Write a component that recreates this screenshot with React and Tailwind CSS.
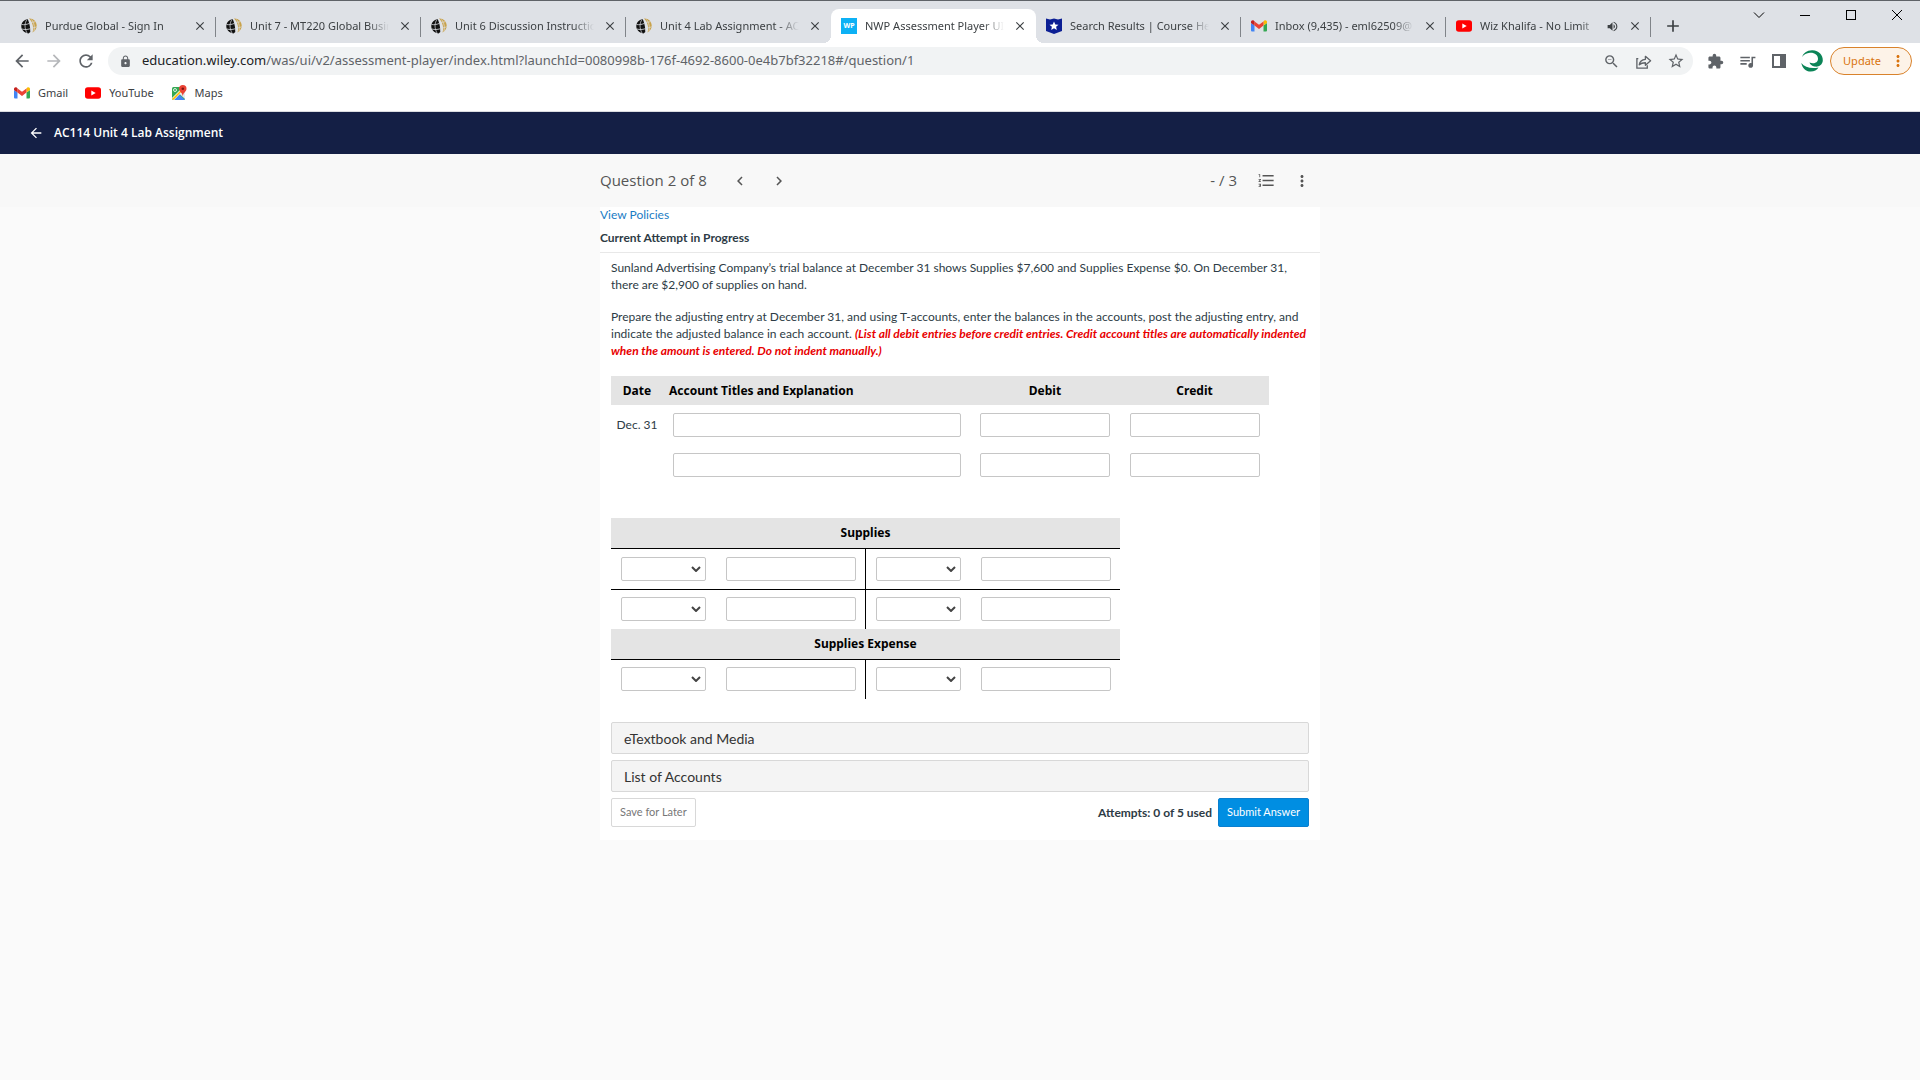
import { MdArrowBack, MdArrowForward, MdRefresh, MdLock, MdExtension, MdQueueMusic, MdStarBorder, MdZoomOut, MdClose, MdAdd, MdVolumeUp, MdFormatListNumbered, MdMoreVert, MdChevronLeft, MdChevronRight } from "react-icons/md";

const PurdueIcon = () => (
  <svg viewBox="0 0 16 16" className="w-4 h-4 shrink-0">
    <path d="M6.500 1C3 2 .3 4.500.3 8.200c0 3.500 2.500 6.300 7.200 7.300L9.300 14c-.2-2 0-4-.6-6.500C8.300 5 7.500 2.500 6.500 1z" fill="#111" />
    <path d="M8 .5c4.500-.3 7.500 3 7.700 7 .1 3-1.500 5.500-4.200 7 .8-2.500.8-4.500.3-7C11.300 5 10 2.500 8 .5z" fill="#c9a24a" />
    <path d="M.5 6.500c3 .5 5.500 0 8-1.200M.8 11c3 .8 5.500.6 8.200-.2" stroke="#dee1e6" strokeWidth="0.800" fill="none" />
    <path d="M6 1.500C3.500 5 3.300 10 6 15M9.500 4.500c2-.3 3.500-.5 5-.8M11.500 10c1.500-.2 2.800-.6 4-1.200M10.500 1.500c2.800 3.500 3.500 8 2.300 12" stroke="#dee1e6" strokeWidth="0.700" fill="none" />
  </svg>
);

const GmailIcon = () => (
  <svg viewBox="0 0 16 16" className="w-4 h-4 shrink-0">
    <path d="M1 13.500h2.500V7.500L0 5v7.500a1 1 0 0 0 1 1z" fill="#4285f4" />
    <path d="M12.500 13.500H15a1 1 0 0 0 1-1V5l-3.500 2.500z" fill="#34a853" />
    <path d="M12.500 3.500v4L16 5V4c0-1.500-1.500-2.300-2.700-1.400z" fill="#fbbc04" />
    <path d="M3.500 7.500v-4L8 6.800l4.500-3.300v4L8 11z" fill="#ea4335" />
    <path d="M0 4v1l3.500 2.500v-4l-.8-.9C1.500 1.700 0 2.500 0 4z" fill="#c5221f" />
  </svg>
);

const YouTubeIcon = () => (
  <svg viewBox="0 0 16 16" className="w-4 h-4 shrink-0">
    <rect x="0" y="2.200" width="16" height="11.600" rx="2.800" fill="#f00" />
    <path d="M6.300 5.500v5L10.700 8z" fill="#fff" />
  </svg>
);

const MapsIcon = () => (
  <svg viewBox="0 0 16 16" className="w-4 h-4 shrink-0">
    <rect x="1" y="2" width="13" height="13" rx="1.500" fill="#34a853" />
    <path d="M8 8.500L14 14V7z" fill="#e8eaed" />
    <path d="M2 15L8 9l6 6z" fill="#4285f4" />
    <path d="M1 13L12 2h2v2L2.500 15.500z" fill="#fff" />
    <path d="M1 14L13 2l1 1L2.500 15z" fill="#fbbc04" />
    <circle cx="4" cy="5" r="1.500" fill="none" stroke="#fff" strokeWidth="0.800" />
    <path d="M11.800 0a3.700 3.700 0 0 0-3.700 3.700c0 2.800 2.900 3.300 3.700 7.300.8-4 3.700-4.500 3.700-7.300A3.700 3.700 0 0 0 11.800 0z" fill="#ea4335" />
    <circle cx="11.800" cy="3.700" r="1.300" fill="#811411" />
  </svg>
);

const WileyIcon = () => (
  <span className="flex items-center justify-center shrink-0 w-4 h-4 bg-[#0db1f5] text-white text-[7px] font-bold">WP</span>
);

const CourseHeroIcon = () => (
  <svg viewBox="0 0 16 16" className="w-4 h-4 shrink-0">
    <path d="M0 0.500l4 1 4-1 4 1 4-1V13l-8 3-8-3z" fill="#0c1f94" />
    <path d="M8 3.500l1.300 2.900 3.200.3-2.400 2.100.7 3.100L8 10.300l-2.800 1.600.7-3.100-2.400-2.100 3.200-.3z" fill="#fff" />
  </svg>
);

const ShareIcon = () => (
  <svg viewBox="0 0 18 18" className="w-[17px] h-[17px]" fill="none" stroke="#5f6368" strokeWidth="1.400">
    <path d="M3.500 6H2v10h11v-3" />
    <path d="M4.500 12.500c.5-3.500 3-5.500 6.500-5.800V3.500l5.500 4.800-5.500 4.700v-2.700c-2.700 0-4.800.5-6.500 2.200z" strokeLinejoin="round" />
  </svg>
);

const ProfileIcon = () => (
  <svg viewBox="0 0 22 22" className="w-[22px] h-[22px]">
    <path d="M1 7C2.500 3 6 0 11.500.2 18 .5 22 5 21.800 10.500c-.3 4.500-4.300 6.800-8.300 6-2.500-.5-4.500-2-5-4 4 1.500 8.500.5 8.500-3.800C17 5 13.500 2.500 9 2.800 5.500 3 3 4.500 1 7z" fill="#0b8457" />
    <path d="M.3 13c3.500 4.200 9.500 6 17.200 4.500-1.500 2.500-4.500 4.200-8 4.100C5 21.500 1.200 18 .3 13z" fill="#0b8457" />
  </svg>
);

const tabs = [
  { title: "Purdue Global - Sign In", icon: <PurdueIcon /> },
  { title: "Unit 7 - MT220 Global Business", icon: <PurdueIcon /> },
  { title: "Unit 6 Discussion Instructions", icon: <PurdueIcon /> },
  { title: "Unit 4 Lab Assignment - AC114", icon: <PurdueIcon />, beforeActive: true },
  { title: "NWP Assessment Player UI", icon: <WileyIcon />, active: true },
  { title: "Search Results | Course Hero", icon: <CourseHeroIcon /> },
  { title: "Inbox (9,435) - eml62509@", icon: <GmailIcon /> },
  { title: "Wiz Khalifa - No Limit", icon: <YouTubeIcon />, audio: true },
];

const Tab = ({ title, icon, active, beforeActive, audio }) => (
  <div
    className={`relative flex items-center w-[205px] min-w-0 h-[34px] pl-[10px] pr-2 ${active ? "bg-white rounded-t-lg" : ""}`}
  >
    {active && (
      <>
        <span className="absolute bottom-0 -left-2 w-2 h-2 bg-[radial-gradient(circle_at_0_0,transparent_8px,#fff_8px)]"></span>
        <span className="absolute bottom-0 -right-2 w-2 h-2 bg-[radial-gradient(circle_at_100%_0,transparent_8px,#fff_8px)]"></span>
      </>
    )}
    {icon}
    <span className="flex-1 min-w-0 ml-2 overflow-hidden whitespace-nowrap text-[11px] text-[#3c4043] [mask-image:linear-gradient(to_right,#000_85%,transparent)]">
      {title}
    </span>
    {audio && <MdVolumeUp size={13} className="ml-2 text-[#3c4043]" />}
    <button type="button" aria-label="Close tab" className="flex items-center justify-center w-4 h-4 ml-2 text-[#3c4043]">
      <MdClose size={14} />
    </button>
    {!active && !beforeActive && <span className="absolute right-0 top-2 w-px h-5 bg-[#808489]"></span>}
  </div>
);

const fieldClass = "block h-6 border border-[#c6c6c6] rounded-xs bg-white outline-none";

const SideSelect = ({ label }) => (
  <div className="relative w-[85px]">
    <select aria-label={label} className={`${fieldClass} w-full appearance-none`}>
      <option></option>
      <option>Dec. 31</option>
      <option>Bal.</option>
      <option>Adj.</option>
    </select>
    <svg viewBox="0 0 10 6" className="absolute right-[5px] top-[9px] w-[10px] h-[6px] pointer-events-none" fill="none" stroke="#444" strokeWidth="2">
      <path d="M1 1l4 4 4-4" />
    </svg>
  </div>
);

const AccountRow = ({ account, row, last }) => (
  <tr className={last ? "h-10" : "h-[41px] border-b border-black"}>
    {["Debit", "Credit"].map((side) => (
      <td key={side} className={`p-0 ${side === "Debit" ? "border-r border-black" : ""}`}>
        <div className="flex gap-5 pl-[10px]">
          <SideSelect label={`${account} ${side} label ${row}`} />
          <input type="text" aria-label={`${account} ${side} amount ${row}`} className={`${fieldClass} w-[130px]`} />
        </div>
      </td>
    ))}
  </tr>
);

const AccountHeader = ({ children }) => (
  <tr className="h-[30px] border-b border-black bg-[#e4e4e4]">
    <th colSpan={2} className="p-0 font-['Noto_Sans',sans-serif] text-[12px] font-bold text-black">
      {children}
    </th>
  </tr>
);

const App = () => {
  return (
    <div className="min-h-screen bg-[#fafafa] font-['Open_Sans',sans-serif]">
      {/* Browser chrome */}
      <div className="font-['Noto_Sans',sans-serif]">
        <div className="flex items-end h-[43px] pl-[11px] border-t border-[#5f6368] bg-[#dee1e6]">
          {tabs.map((tab) => (
            <Tab key={tab.title} {...tab} />
          ))}
          <button type="button" aria-label="New tab" className="flex items-center justify-center h-[34px] ml-3 text-[#3c4043]">
            <MdAdd size={20} />
          </button>
          <div className="flex items-center self-start gap-[30px] h-7 ml-auto pr-[15px] text-black">
            <button type="button" aria-label="Search tabs">
              <svg viewBox="0 0 16 16" className="w-4 h-4" fill="none" stroke="currentColor"><path d="M3 5.500l5 5 5-5" /></svg>
            </button>
            <button type="button" aria-label="Minimize">
              <svg viewBox="0 0 16 16" className="w-4 h-4" fill="none" stroke="currentColor"><path d="M3 8.500h10" /></svg>
            </button>
            <button type="button" aria-label="Maximize">
              <svg viewBox="0 0 16 16" className="w-4 h-4" fill="none" stroke="currentColor"><rect x="3.500" y="3.500" width="9" height="9" /></svg>
            </button>
            <button type="button" aria-label="Close">
              <svg viewBox="0 0 16 16" className="w-4 h-4" fill="none" stroke="currentColor"><path d="M3 3l10 10M13 3L3 13" /></svg>
            </button>
          </div>
        </div>

        {/* Address bar */}
        <div className="flex items-center h-9 pl-3 pr-2 bg-white text-[#5f6368]">
          <button type="button" aria-label="Back"><MdArrowBack size={20} /></button>
          <button type="button" aria-label="Forward" className="ml-3 text-[#b5b7ba]"><MdArrowForward size={20} /></button>
          <button type="button" aria-label="Reload" className="ml-3"><MdRefresh size={20} /></button>
          <div className="flex flex-1 items-center h-7 ml-3 pl-[11px] pr-2 rounded-full bg-[#f1f3f4]">
            <MdLock size={13} />
            <span className="flex-1 ml-[10px] whitespace-nowrap text-[13px] text-[#5f6368]">
              <span className="text-[#202124]">education.wiley.com</span>/was/ui/v2/assessment-player/index.html?launchId=0080998b-176f-4692-8600-0e4b7bf32218#/question/1
            </span>
            <button type="button" aria-label="Zoom"><MdZoomOut size={17} /></button>
            <button type="button" aria-label="Share" className="ml-[15px]"><ShareIcon /></button>
            <button type="button" aria-label="Bookmark this tab" className="ml-[15px]"><MdStarBorder size={18} /></button>
          </div>
          <button type="button" aria-label="Extensions" className="ml-[14px]"><MdExtension size={17} /></button>
          <button type="button" aria-label="Media" className="ml-[14px]"><MdQueueMusic size={19} /></button>
          <button type="button" aria-label="Side panel" className="ml-[14px]">
            <svg viewBox="0 0 16 16" className="w-4 h-4"><path d="M1 1h14v14H1zM3 3v10h6V3z" fill="currentColor" fillRule="evenodd" /></svg>
          </button>
          <button type="button" aria-label="Profile" className="ml-[14px]"><ProfileIcon /></button>
          <button type="button" className="flex items-center h-7 ml-[7px] pl-3 pr-1 border border-[#d9822b] rounded-full bg-[#fdf3e8] text-[11px] text-[#d9730d]">
            Update
            <MdMoreVert size={18} className="ml-2" />
          </button>
        </div>

        {/* Bookmarks */}
        <div className="flex items-center h-[33px] gap-[17px] pl-[14px] pb-1 border-b border-[#dadce0] bg-white text-[11px] text-[#3c4043]">
          <a href="#gmail" className="flex items-center gap-2"><GmailIcon />Gmail</a>
          <a href="#youtube" className="flex items-center gap-2"><YouTubeIcon />YouTube</a>
          <a href="#maps" className="flex items-center gap-2"><MapsIcon />Maps</a>
        </div>
      </div>

      <header className="flex items-center h-[42px] pl-7 gap-[10px] bg-[#141f45] text-white">
        <button type="button" aria-label="Go back"><MdArrowBack size={16} /></button>
        <h1 className="text-[12px] font-semibold">AC114 Unit 4 Lab Assignment</h1>
      </header>

      {/* Question toolbar */}
      <div className="bg-[#f8f8f8]">
        <div className="flex items-center w-full max-w-[720px] h-[53px] mx-auto text-[15px] text-[#555]">
          <h2>Question 2 of 8</h2>
          <button type="button" aria-label="Previous question" className="ml-6"><MdChevronLeft size={18} /></button>
          <button type="button" aria-label="Next question" className="ml-[21px]"><MdChevronRight size={18} /></button>
          <span className="ml-auto">- / 3</span>
          <button type="button" aria-label="Question list" className="ml-5"><MdFormatListNumbered size={19} /></button>
          <button type="button" aria-label="More options" className="ml-[17px] mr-[9px]"><MdMoreVert size={18} /></button>
        </div>
      </div>

      <main className="w-full max-w-[720px] mx-auto pb-[13px] bg-white font-['Lato',sans-serif] text-[12px] text-[#2d3b45]">
        <div className="flex flex-col items-start gap-[7px] pb-[6px] border-b border-[#e8e8e8] leading-4">
          <a href="#policies" className="text-[#1a7cc4]">View Policies</a>
          <h3 className="font-bold">Current Attempt in Progress</h3>
        </div>

        <div className="px-[11px] pt-[6px]">
          <p className="leading-[17px]">
            Sunland Advertising Company’s trial balance at December 31 shows Supplies $7,600 and Supplies Expense $0. On December 31, there are $2,900 of supplies on hand.
          </p>
          <p className="mt-[15px] leading-[17px]">
            Prepare the adjusting entry at December 31, and using T-accounts, enter the balances in the accounts, post the adjusting entry, and indicate the adjusted balance in each account.{" "}
            <strong className="font-bold italic text-[#e80000]">
              (List all debit entries before credit entries. Credit account titles are automatically indented when the amount is entered. Do not indent manually.)
            </strong>
          </p>

          <table className="mt-[17px] border-collapse">
            <thead>
              <tr className="h-[29px] bg-[#e4e4e4] font-['Noto_Sans',sans-serif] text-[12px] text-black">
                <th className="w-[52px] p-0 font-bold">Date</th>
                <th className="w-[307px] p-0 pl-[6px] text-left font-bold">Account Titles and Explanation</th>
                <th className="w-[150px] p-0 font-bold">Debit</th>
                <th className="w-[149px] p-0 font-bold">Credit</th>
              </tr>
            </thead>
            <tbody>
              {["Dec. 31", ""].map((date, i) => (
                <tr key={i} className="h-10">
                  <td className="p-0 text-center">{date}</td>
                  <td className="p-0 pl-[10px]">
                    <input type="text" aria-label={`Account title ${i + 1}`} className={`${fieldClass} w-[288px]`} />
                  </td>
                  <td className="p-0 pl-[10px]">
                    <input type="text" aria-label={`Debit ${i + 1}`} className={`${fieldClass} w-[130px]`} />
                  </td>
                  <td className="p-0 pl-[10px]">
                    <input type="text" aria-label={`Credit ${i + 1}`} className={`${fieldClass} w-[130px]`} />
                  </td>
                </tr>
              ))}
            </tbody>
          </table>

          <table className="w-[509px] mt-[33px] table-fixed border-collapse">
            <tbody>
              <AccountHeader>Supplies</AccountHeader>
              <AccountRow account="Supplies" row={1} />
              <AccountRow account="Supplies" row={2} last />
              <AccountHeader>Supplies Expense</AccountHeader>
              <AccountRow account="Supplies Expense" row={1} last />
            </tbody>
          </table>

          <div className="flex flex-col gap-[6px] mt-[23px] text-[14px] text-[#333]">
            <button type="button" className="h-8 px-3 border border-[#d8d8d8] rounded-xs bg-[#f4f4f4] text-left">eTextbook and Media</button>
            <button type="button" className="h-8 px-3 border border-[#d8d8d8] rounded-xs bg-[#f4f4f4] text-left">List of Accounts</button>
          </div>

          <div className="flex items-center mt-[6px]">
            <button type="button" className="h-[29px] px-2 border border-[#d8d8d8] rounded-xs bg-white text-[11px] text-[#777]">Save for Later</button>
            <span className="ml-auto font-bold">Attempts: 0 of 5 used</span>
            <button type="button" className="h-[29px] ml-[6px] px-2 border border-[#0a7fcf] rounded-xs bg-[#008ee2] text-[11px] text-white">Submit Answer</button>
          </div>
        </div>
      </main>
    </div>
  );
};

export default App;
